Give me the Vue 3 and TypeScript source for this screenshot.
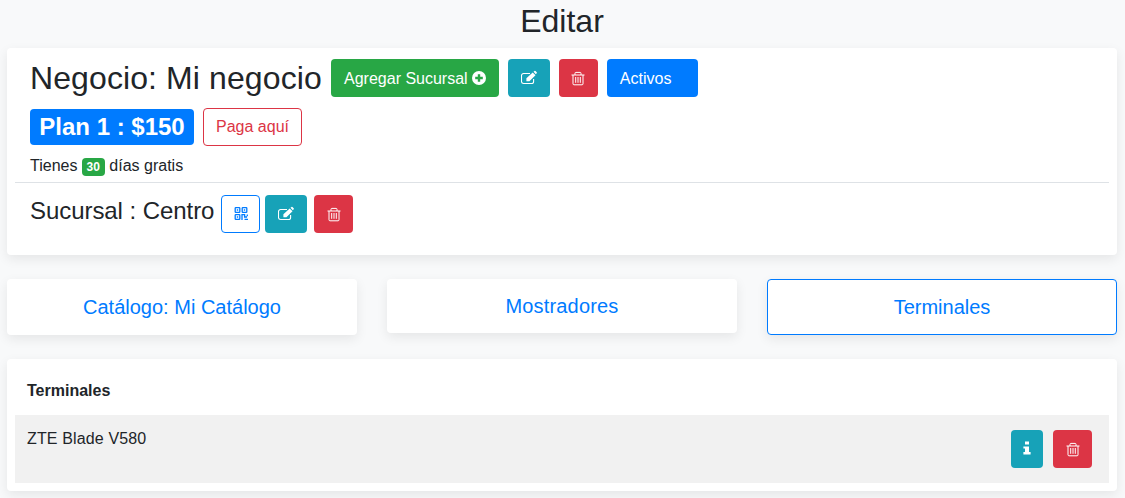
<template>
  <div class="page">
    <h2 class="title">Editar</h2>

    <section class="card business">
      <div class="row head-row">
        <h2 class="biz-name">Negocio: Mi negocio</h2>
        <button class="btn green add-btn">
          Agregar Sucursal
          <svg class="plus" viewBox="0 0 14 14"><circle cx="7" cy="7" r="7" fill="#fff" /><path d="M7 3.2v7.6M3.2 7h7.6" stroke="#28a745" stroke-width="2.4" /></svg>
        </button>
        <button class="btn teal icon-btn"><svg class="ico" viewBox="0 0 16 16"><use href="#edit-ico" /></svg></button>
        <button class="btn red trash-btn"><svg class="ico" viewBox="0 0 16 16"><use href="#trash-ico" /></svg></button>
        <button class="btn blue status-btn">Activos</button>
      </div>

      <div class="row plan-row">
        <span class="plan">Plan 1 : $150</span>
        <button class="btn outline-red pay-btn">Paga aquí</button>
      </div>

      <p class="trial">Tienes <span class="days">30</span> días gratis</p>

      <hr class="divider" />

      <div class="row branch-row">
        <h4 class="branch-name">Sucursal : Centro</h4>
        <button class="btn outline-blue trash-btn">
          <svg class="ico" viewBox="0 0 16 16" fill="none" stroke="#007bff" stroke-width="1.3">
            <rect x="2.2" y="1.7" width="4.6" height="4.6" rx="0.6" />
            <rect x="9.2" y="1.7" width="4.6" height="4.6" rx="0.6" />
            <rect x="2.2" y="8.7" width="4.6" height="4.6" rx="0.6" />
            <path d="M9 14V8.6h2.6v2.4H14M11.5 13.4H15M14.3 8.4v1.8" />
            <path d="M3.8 3.3h1.4v1.4H3.8zM10.8 3.3h1.4v1.4h-1.4zM3.8 10.3h1.4v1.4H3.8z" fill="#007bff" stroke="none" />
          </svg>
        </button>
        <button class="btn teal icon-btn"><svg class="ico" viewBox="0 0 16 16"><use href="#edit-ico" /></svg></button>
        <button class="btn red trash-btn"><svg class="ico" viewBox="0 0 16 16"><use href="#trash-ico" /></svg></button>
      </div>
    </section>

    <nav class="tabs">
      <a v-for="tab in tabs" :key="tab.label" class="card tab" :class="{ active: tab.active, short: tab.short }">{{ tab.label }}</a>
    </nav>

    <section class="card terminals">
      <h6 class="terminals-title">Terminales</h6>
      <div v-for="t in terminals" :key="t" class="terminal">
        <span class="terminal-name">{{ t }}</span>
        <div class="terminal-actions">
          <button class="btn teal info-btn">
            <svg class="ico" viewBox="0 0 16 16"><path d="M6 .5h4v3H6zM4.4 5.5H10V11h1.6v2.5H4.4V11H6V7.6H4.4z" fill="#fff" /></svg>
          </button>
          <button class="btn red trash-btn"><svg class="ico" viewBox="0 0 16 16"><use href="#trash-ico" /></svg></button>
        </div>
      </div>
    </section>

    <svg class="defs" width="0" height="0">
      <defs>
        <g id="edit-ico">
          <path d="M12.6 9v2.4a2.1 2.1 0 0 1-2.1 2.1H2.6a2.1 2.1 0 0 1-2.1-2.1V5.6a2.1 2.1 0 0 1 2.1-2.1H9" fill="none" stroke="#fff" stroke-width="1.1" />
          <path d="M5.4 11.2V8.2l6.3-5.7 2.8 2.8-6.1 5.9zM12.5 1.8l1-.8q.5-.3 1 .1l1.2 1.2q.4.5 0 1l-.9 1z" fill="#fff" />
        </g>
        <g id="trash-ico" fill="none" stroke="#fff" stroke-width="1">
          <path d="M1.5 5h13M5 5V3.3a.9.9 0 0 1 .9-.9h4.2a.9.9 0 0 1 .9.9V5" />
          <path d="M3 5v8.8a1 1 0 0 0 1 1h8a1 1 0 0 0 1-1V5" />
          <path d="M5.7 7v5.8M8 7v5.8M10.3 7v5.8" />
        </g>
      </defs>
    </svg>
  </div>
</template>

<script setup lang="ts">
interface Tab {
  label: string;
  active?: boolean;
  short?: boolean;
}

const tabs: Tab[] = [
  { label: 'Catálogo: Mi Catálogo' },
  { label: 'Mostradores', short: true },
  { label: 'Terminales', active: true },
];

const terminals: string[] = ['ZTE Blade V580'];
</script>

<style>
html,
body {
  background: #f8f9fa;
}
</style>

<style scoped>
.page {
  height: 498px;
  overflow: hidden;
  box-sizing: border-box;
  padding: 0 8px 0 7px;
  font-family: 'Liberation Sans', Arial, sans-serif;
  font-size: 16px;
  line-height: 1.5;
  color: #212529;
  background: #f8f9fa;
}

.title {
  margin: 0;
  padding: 2px 0 8px;
  font-size: 32px;
  font-weight: 400;
  line-height: 38px;
  text-align: center;
}

.card {
  display: block;
  background: #fff;
  border-radius: 4px;
  box-shadow: 0 4px 12px rgba(0, 0, 0, 0.08);
}

.business {
  height: 207px;
  box-sizing: border-box;
  padding: 11px 8px 0;
}

.row {
  display: flex;
  align-items: flex-start;
}

.head-row {
  padding-left: 15px;
  gap: 9px;
}

.biz-name {
  margin: 0;
  font-size: 32px;
  font-weight: 400;
  line-height: 38px;
  letter-spacing: 0.1px;
}

.btn {
  display: inline-flex;
  align-items: center;
  justify-content: center;
  height: 38px;
  box-sizing: border-box;
  padding: 0;
  border: 1px solid transparent;
  border-radius: 4px;
  font-family: inherit;
  font-size: 16px;
  color: #fff;
}

.green { background: #28a745; }
.teal { background: #17a2b8; }
.red { background: #dc3545; }
.blue { background: #007bff; }

.add-btn {
  width: 168px;
  gap: 4px;
  padding-top: 1px;
}

.plus {
  width: 14px;
  height: 14px;
  margin-top: -1px;
}

.icon-btn {
  width: 42px;
}

.trash-btn {
  width: 39px;
}

.info-btn {
  width: 32px;
}

.status-btn {
  width: 91px;
  justify-content: flex-start;
  padding: 1px 0 0 12px;
}

.ico {
  width: 16px;
  height: 16px;
}

.plan-row {
  align-items: center;
  gap: 9px;
  margin-top: 11px;
  padding-left: 15px;
}

.plan {
  width: 164px;
  border-radius: 4px;
  background: #007bff;
  color: #fff;
  font-size: 24px;
  font-weight: 700;
  line-height: 36px;
  text-align: center;
}

.outline-red {
  background: #fff;
  border-color: #dc3545;
  color: #dc3545;
}

.pay-btn {
  width: 99px;
}

.trial {
  margin: 8px 0 0;
  padding-left: 15px;
  height: 24px;
  line-height: 24px;
}

.days {
  display: inline-block;
  width: 23px;
  border-radius: 4px;
  background: #28a745;
  color: #fff;
  font-size: 12px;
  font-weight: 700;
  line-height: 18px;
  text-align: center;
  letter-spacing: 0.3px;
}

.divider {
  margin: 4px 0 0;
  border: 0;
  border-top: 1px solid #dee2e6;
}

.branch-row {
  margin-top: 12px;
  padding-left: 15px;
  gap: 5px;
}

.branch-name {
  width: 185px;
  margin: 0 1px 0 0;
  font-size: 24px;
  font-weight: 400;
  line-height: 32px;
  letter-spacing: -0.06px;
}

.outline-blue {
  background: #fff;
  border-color: #007bff;
}

.branch-row .red {
  margin-left: 2px;
}

.tabs {
  display: grid;
  grid-template-columns: repeat(3, 350px);
  gap: 30px;
  align-items: start;
  margin-top: 24px;
}

.tab {
  height: 56px;
  box-sizing: border-box;
  border: 1px solid transparent;
  color: #007bff;
  font-size: 20px;
  line-height: 54px;
  text-align: center;
}

.tab.short {
  height: 54px;
  line-height: 52px;
  letter-spacing: 0.18px;
}

.tab.active {
  border-color: #007bff;
}

.terminals {
  height: 132px;
  box-sizing: border-box;
  margin-top: 24px;
  padding: 20px 8px 0;
}

.terminals-title {
  margin: 0;
  padding-left: 12px;
  font-size: 16px;
  font-weight: 700;
  line-height: 24px;
}

.terminal {
  display: flex;
  justify-content: space-between;
  height: 68px;
  box-sizing: border-box;
  margin-top: 12px;
  padding: 12px 17px 0 12px;
  background: #f1f1f1;
}

.terminal-name {
  letter-spacing: 0.14px;
}

.terminal-actions {
  display: flex;
  gap: 10px;
  padding-top: 3px;
}

.defs {
  position: absolute;
}
</style>
